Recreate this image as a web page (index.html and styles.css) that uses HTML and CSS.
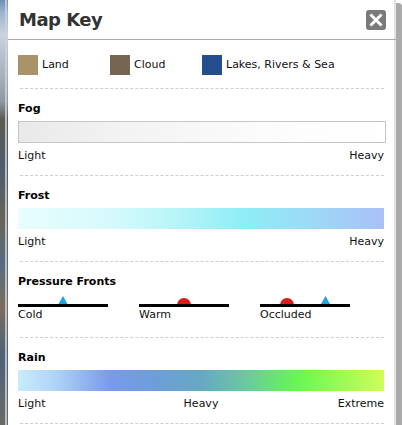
FILE: index.html
```html
<!DOCTYPE html>
<html>
<head>
<meta charset="utf-8">
<link rel="stylesheet" href="styles.css">
</head>
<body>
<div class="frame">
  <div class="map-strip"></div>
  <div class="panel">
    <div class="header">
      <h1 class="title">Map Key</h1>
      <button class="close" aria-label="Close">
        <svg width="20" height="20" viewBox="0 0 20 20"><path d="M5.5 5.5 L14.5 14.5 M14.5 5.5 L5.5 14.5" stroke="#fff" stroke-width="3" stroke-linecap="square"/></svg>
      </button>
    </div>
    <div class="legend">
      <div class="legend-item"><span class="swatch land"></span>Land</div>
      <div class="legend-item"><span class="swatch cloud"></span>Cloud</div>
      <div class="legend-item"><span class="swatch sea"></span>Lakes, Rivers &amp; Sea</div>
    </div>
    <div class="sep"></div>
    <div class="section">
      <div class="sec-title">Fog</div>
      <div class="bar fog"></div>
      <div class="labels two"><span>Light</span><span>Heavy</span></div>
    </div>
    <div class="sep"></div>
    <div class="section">
      <div class="sec-title">Frost</div>
      <div class="bar frost"></div>
      <div class="labels two"><span>Light</span><span>Heavy</span></div>
    </div>
    <div class="sep"></div>
    <div class="section fronts-sec">
      <div class="sec-title">Pressure Fronts</div>
      <div class="fronts">
        <div class="front">
          <svg width="90" height="18" viewBox="0 0 90 18"><polygon points="40.5,15 49.5,15 45,7" fill="#1ba3e6"/><rect x="0" y="15" width="90" height="3" fill="#000"/></svg>
          <span>Cold</span>
        </div>
        <div class="front">
          <svg width="90" height="18" viewBox="0 0 90 18"><path d="M38 16 A7 7 0 0 1 52 16 Z" fill="#dd1b1b"/><rect x="0" y="15" width="90" height="3" fill="#000"/></svg>
          <span>Warm</span>
        </div>
        <div class="front">
          <svg width="90" height="18" viewBox="0 0 90 18"><path d="M20 16 A7 7 0 0 1 34 16 Z" fill="#dd1b1b"/><polygon points="61,15 70,15 65.5,7" fill="#1ba3e6"/><rect x="0" y="15" width="90" height="3" fill="#000"/></svg>
          <span>Occluded</span>
        </div>
      </div>
    </div>
    <div class="sep"></div>
    <div class="section">
      <div class="sec-title">Rain</div>
      <div class="bar rain"></div>
      <div class="labels three"><span>Light</span><span class="mid">Heavy</span><span class="end">Extreme</span></div>
    </div>
    <div class="sep"></div>
  </div>
  <div class="edge"></div>
</div>
</body>
</html>
```
FILE: styles.css
```css
html, body {
  margin: 0;
  padding: 0;
  background: #fff;
}
body {
  width: 402px;
  height: 425px;
  overflow: hidden;
  font-family: "DejaVu Sans", Verdana, sans-serif;
  font-size: 11px;
  color: #111;
}
.frame {
  display: flex;
  height: 425px;
}
.map-strip {
  width: 8px;
  flex: none;
  background:
    linear-gradient(90deg, transparent 0 5px, rgba(200,212,228,0.8) 5px 7px, transparent 7px),
    linear-gradient(180deg, #6f8db3 0%, #9fb3cc 3%, #c9d2de 8%, #a7afbb 18%, #8f96a0 24%, #5e5a52 28%, #4f5d6c 40%, #6a6459 52%, #586b80 62%, #7a6d5c 72%, #4f6178 84%, #6b6a66 100%);
}
.panel {
  flex: 1;
  padding: 0 10px;
  background: #fff;
  border-top-left-radius: 8px;
  border-right: 2px solid #e4e4e4;
  display: flex;
  flex-direction: column;
}
.edge {
  width: 6px;
  flex: none;
  background: #aaa;
  margin-top: 3px;
  border-top-right-radius: 4px;
}
.header {
  margin: 0 -12px 0 -10px;
  height: 39px;
  padding: 0 10px 0 11px;
  border-bottom: 1px solid #acacac;
  display: flex;
  align-items: center;
  justify-content: space-between;
}
.title {
  margin: 0;
  font-size: 18px;
  font-weight: bold;
  letter-spacing: -0.5px;
  color: #333;
  line-height: 22px;
  padding-top: 1px;
}
.close {
  width: 20px;
  height: 20px;
  margin: 0;
  padding: 0;
  border: none;
  border-radius: 3px;
  background: #7a7a7a;
  display: flex;
  align-items: center;
  justify-content: center;
}
.close svg { display: block; }
.legend {
  display: flex;
  padding: 15px 0 13px;
}
.legend-item {
  width: 92px;
  display: flex;
  align-items: center;
  line-height: 20px;
}
.legend-item:last-child { width: auto; }
.swatch {
  width: 20px;
  height: 20px;
  margin-right: 4px;
  flex: none;
}
.land { background: #a8936a; }
.cloud { background: #766550; }
.sea { background: #244f8c; }
.sep {
  border-top: 1px dashed #cfcfcf;
  margin-left: 2px;
}
.section {
  padding: 13px 0 12px;
}
.sec-title {
  font-weight: bold;
  line-height: 14px;
  color: #000;
}
.bar {
  margin-top: 5px;
  height: 21px;
}
.fog {
  height: 20px;
  margin-right: -2px;
  border: 1px solid #c6c6c6;
  background: linear-gradient(90deg, #e9e9e9 0%, #f3f3f3 30%, #fcfcfc 70%, #fff 100%);
}
.frost {
  background: linear-gradient(90deg, #e8fdfd 0%, #d6fafc 25%, #b4f4f8 45%, #8eedf6 62%, #9cdaf6 80%, #aac0f8 100%);
}
.rain {
  background: linear-gradient(90deg, #c8ecfc 0%, #b0d4f6 10%, #7a9aec 25%, #6c9ed8 38%, #66a8c4 50%, #6cc8a0 62%, #66f752 76%, #a2fb56 90%, #d0fc58 100%);
}
.labels {
  margin-top: 6px;
  line-height: 14px;
}
.labels.two {
  display: flex;
  justify-content: space-between;
}
.labels.three {
  display: grid;
  grid-template-columns: 1fr auto 1fr;
}
.labels .end { text-align: right; }
.fronts-sec { padding-bottom: 15px; }
.fronts {
  display: flex;
  gap: 31px;
}
.front {
  width: 90px;
  display: flex;
  flex-direction: column;
}
.front svg { display: block; }
.front span {
  margin-top: 1px;
  line-height: 14px;
}
```
